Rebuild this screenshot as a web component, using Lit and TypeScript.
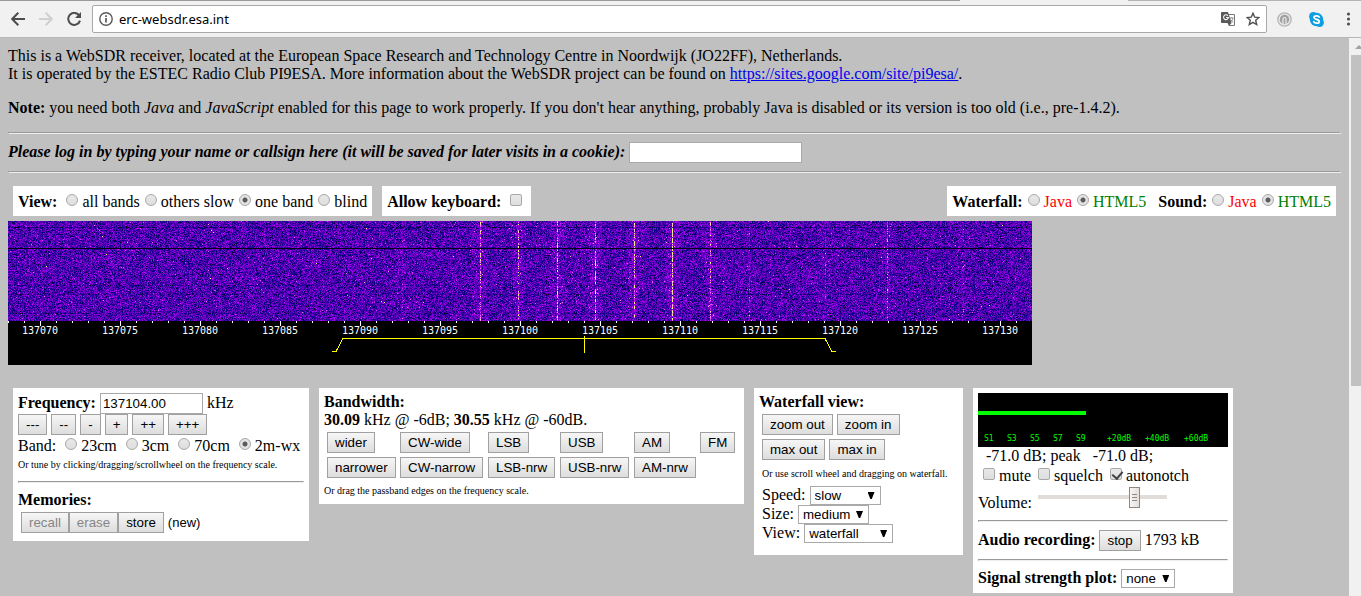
import { LitElement, html, svg, css } from "lit";
import { customElement, property, query } from "lit/decorators.js";

const controls = css`
  * {
    box-sizing: border-box;
  }
  button,
  input,
  select {
    font-family: "Liberation Sans", Arial, sans-serif;
    color: #000;
    margin: 0;
  }
  button {
    height: 21px;
    padding: 0 7px;
    border: 1px solid #a0a0a0;
    border-radius: 0;
    background: linear-gradient(#f6f6f6, #dddddd);
    white-space: nowrap;
  }
  button:disabled {
    color: #858585;
  }
  .text {
    height: 21px;
    padding: 1px 2px;
    border: 1px solid #a9a9a9;
    background: #fff;
  }
  .radio,
  .check {
    appearance: none;
    width: 12px;
    height: 12px;
    margin: 0 4px 0 5px;
    border: 1px solid #a8a8a8;
    background: linear-gradient(#e8e8e8, #dedede);
    vertical-align: 1px;
  }
  .radio {
    border-radius: 50%;
  }
  .radio:checked {
    background: radial-gradient(circle, #5c5c5c 2px, #e4e4e4 3px);
  }
  .check {
    border-radius: 2px;
    position: relative;
  }
  .check:checked::after {
    content: "";
    position: absolute;
    left: 3px;
    top: 0;
    width: 5px;
    height: 8px;
    border: solid #404040;
    border-width: 0 2px 2px 0;
    transform: rotate(40deg);
  }
  hr {
    margin: 8px 0;
    border: 1px solid;
    border-color: #9a9a9a #eee #eee #9a9a9a;
  }
  .line {
    line-height: 18px;
    white-space: nowrap;
  }
  .choices {
    padding-top: 2px;
  }
`;

@customElement("browser-bar")
class BrowserBar extends LitElement {
  static styles = css`
    :host {
      display: block;
    }
    .tabs {
      display: flex;
      height: 1px;
      background: #999;
    }
    .before {
      flex: 960;
    }
    .active {
      flex: 168;
      background: #f2f2f2;
    }
    .after {
      flex: 233;
      background: #b5b5b5;
    }
    .bar {
      display: flex;
      align-items: center;
      height: 36px;
      padding-left: 11px;
      gap: 14px;
      background: #f1f1f1;
    }
    .edge {
      height: 1px;
      background: #b6b6b6;
    }
    svg {
      display: block;
      flex: none;
    }
    .icon {
      padding: 0;
      border: 0;
      background: none;
      flex: none;
    }
    .address {
      display: flex;
      flex: 1;
      align-items: center;
      gap: 6px;
      height: 28px;
      box-sizing: border-box;
      margin-left: -4px;
      padding: 0 6px;
      background: #fff;
      border: 1px solid #a9a9a9;
      border-radius: 2px;
    }
    .url {
      flex: 1;
      min-width: 0;
      padding: 0;
      border: 0;
      font: 13px "Noto Sans", "Open Sans", sans-serif;
      color: #000;
    }
    .tools {
      display: flex;
      align-items: center;
      gap: 17px;
      margin-left: -4px;
      padding-right: 5px;
    }
    .extras {
      display: flex;
      gap: 11px;
    }
  `;

  render() {
    return html`
      <div class="tabs"><i class="before"></i><i class="active"></i><i class="after"></i></div>
      <div class="bar">
        <button class="icon" aria-label="Back">
          <svg width="14" height="14" viewBox="0 0 14 14" fill="none" stroke="#4d4d4d" stroke-width="2">
            <path d="M14 7H1.5M7.3 0.8 1.2 7l6.1 6.2" />
          </svg>
        </button>
        <button class="icon" aria-label="Forward">
          <svg width="14" height="14" viewBox="0 0 14 14" fill="none" stroke="#d0d0d0" stroke-width="2">
            <path d="M0 7h12.5M6.7 0.8 12.8 7l-6.1 6.2" />
          </svg>
        </button>
        <button class="icon" aria-label="Reload">
          <svg width="15" height="14" viewBox="0 0 15 14">
            <path d="M12.3 3.6A6 6 0 1 0 13 8.6" fill="none" stroke="#4d4d4d" stroke-width="2" />
            <path d="M14 0v6H8z" fill="#4d4d4d" />
          </svg>
        </button>
        <div class="address">
          <svg width="14" height="14" viewBox="0 0 14 14">
            <circle cx="7" cy="7" r="6.2" fill="none" stroke="#5a5a5a" stroke-width="1.4" />
            <path d="M7 6v4.5M7 3.3v1.6" stroke="#5a5a5a" stroke-width="1.7" />
          </svg>
          <input class="url" aria-label="Address" value="erc-websdr.esa.int" />
          <div class="extras">
            <svg width="14" height="14" viewBox="0 0 14 14">
              <path d="M5 2.5h8.5v11H8" fill="#fff" stroke="#777" />
              <path d="M0.8 0H7l3.6 11H0.8a.8.8 0 0 1-.8-.8V.8A.8.8 0 0 1 .8 0z" fill="#5a5a5a" />
              <path d="M6.9 3.7a2.4 2.4 0 1 0 .5 1.8H5.1" fill="none" stroke="#fff" stroke-width="1.1" />
              <path d="M8.8 6h3.8M10.7 5v1M12 6c-.4 2-1.3 3.3-2.6 4.3M9.7 7.5c.5 1.3 1.4 2.2 2.6 2.9" fill="none" stroke="#888" stroke-width=".9" />
              <path d="M6.5 11h4l-2.5 3z" fill="#5a5a5a" />
            </svg>
            <svg width="14" height="14" viewBox="0 0 14 14" fill="none" stroke="#505050" stroke-width="1.4">
              <path d="M7 1.2l1.7 3.9 4.3.4-3.3 2.8 1 4.2L7 10.3l-3.7 2.2 1-4.2L1 5.5l4.3-.4z" />
            </svg>
          </div>
        </div>
        <div class="tools">
          <svg width="15" height="15" viewBox="0 0 15 15">
            <circle cx="7.5" cy="7.5" r="6.7" fill="#e8e8e8" stroke="#b5b5b5" stroke-width="1.3" />
            <circle cx="7.5" cy="7.5" r="4.7" fill="#a0a0a0" />
            <path d="M6 12V7a1.5 1.5 0 0 1 3 0v5" fill="none" stroke="#eee" stroke-width="1.2" />
          </svg>
          <svg width="15" height="15" viewBox="0 0 15 15">
            <circle cx="4.4" cy="4.4" r="4.3" fill="#0f9fe0" />
            <circle cx="10.6" cy="10.6" r="4.3" fill="#0f9fe0" />
            <circle cx="7.5" cy="7.5" r="6.7" fill="#0f9fe0" />
            <path d="M10.3 5.1C9.6 3.7 5 3.3 5 5.6c0 2.2 5.3 1.4 5.3 3.9 0 2.3-4.7 2.2-5.6.2" fill="none" stroke="#fff" stroke-width="1.7" stroke-linecap="round" />
          </svg>
          <button class="icon" aria-label="Menu">
            <svg width="15" height="14" viewBox="0 0 15 14" fill="#505050">
              <circle cx="7.5" cy="2" r="1.6" /><circle cx="7.5" cy="7" r="1.6" /><circle cx="7.5" cy="12" r="1.6" />
            </svg>
          </button>
        </div>
      </div>
      <div class="edge"></div>
    `;
  }
}

@customElement("drop-down")
class DropDown extends LitElement {
  @property() label = "";
  @property() value = "";
  @property() size = "";

  static styles = [
    controls,
    css`
      :host {
        display: block;
        line-height: 18px;
        height: 19px;
        white-space: nowrap;
      }
      :host([heading]) label {
        font-weight: bold;
      }
      .box {
        position: relative;
        display: inline-block;
        height: 19px;
      }
      .box::after {
        content: "";
        position: absolute;
        right: 6px;
        top: 6px;
        width: 7px;
        height: 7px;
        background: #000;
        clip-path: polygon(0 0, 100% 0, 60% 100%, 40% 100%);
        pointer-events: none;
      }
      select {
        appearance: none;
        height: 19px;
        padding: 0 4px;
        border: 1px solid #a9a9a9;
        border-radius: 0;
        background: #fff;
      }
      .small {
        width: 54px;
      }
      .medium {
        width: 71px;
      }
      .large {
        width: 89px;
      }
    `,
  ];

  render() {
    return html`<label for="s">${this.label}</label> <span class="box"
        ><select id="s" class=${this.size}><option>${this.value}</option></select></span
      >`;
  }
}

@customElement("water-fall")
class WaterFall extends LitElement {
  @query("canvas") canvas!: HTMLCanvasElement;

  static styles = css`
    :host {
      display: block;
      width: 1024px;
      max-width: 100%;
      overflow: hidden;
      background: #000;
    }
    canvas,
    svg {
      display: block;
    }
    .tick {
      fill: #fff;
    }
    .freq {
      fill: #fff;
      font: 10px "DejaVu Sans Mono", monospace;
      text-anchor: middle;
    }
    .pass {
      fill: none;
      stroke: #ff0;
      shape-rendering: crispEdges;
    }
  `;

  firstUpdated() {
    const width = 1024;
    const height = 100;
    const ctx = this.canvas.getContext("2d")!;
    const image = ctx.createImageData(width, height);
    let seed = 137104;
    const random = () => {
      seed = (Math.imul(seed, 1664525) + 1013904223) >>> 0;
      return seed / 4294967296;
    };
    // Signal level to colour: black, blue, violet, magenta, pink, yellow.
    const stops = [
      [0, 0, 0, 20],
      [0.2, 0, 0, 125],
      [0.42, 76, 0, 175],
      [0.62, 140, 0, 220],
      [0.78, 190, 10, 255],
      [0.9, 255, 140, 240],
      [1, 255, 250, 130],
    ];
    const colour = (v: number) => {
      let i = 1;
      while (i < stops.length - 1 && v > stops[i][0]) i++;
      const [a, b] = [stops[i - 1], stops[i]];
      const t = Math.min(1, Math.max(0, (v - a[0]) / (b[0] - a[0])));
      return [1, 2, 3].map((k) => a[k] + (b[k] - a[k]) * t);
    };
    // Column and strength of each carrier.
    const carriers: [number, number][] = [
      [394, 0.14], [472, 0.38], [510, 0.42], [549, 0.44], [587, 0.42],
      [626, 0.43], [664, 0.54], [702, 0.34], [741, 0.14], [817, 0.16], [879, 0.28], [955, 0.1],
    ];
    const column = new Array(width).fill(0);
    const halo = new Array(width).fill(0);
    for (const [x, level] of carriers) {
      column[x] = level;
      for (let d = -9; d <= 9; d++) halo[x + d] = level * 0.22 * (1 - Math.abs(d) / 10);
    }
    const rows: Record<number, number> = { 6: -0.15, 27: -1, 64: -0.08, 73: -0.08, 92: -0.08 };
    for (let y = 0; y < height; y++) {
      for (let x = 0; x < width; x++) {
        const noise = (random() + random() + random()) / 3;
        let v = 0.42 + (noise - 0.5) * 0.95 + halo[x] + (rows[y] ?? 0);
        if (column[x] && random() < 0.85) v += column[x] * 0.9;
        if (random() < 0.0015) v += 0.35;
        const p = (y * width + x) * 4;
        const [r, g, b] = colour(v);
        image.data[p] = r;
        image.data[p + 1] = g;
        image.data[p + 2] = b;
        image.data[p + 3] = 255;
      }
    }
    ctx.putImageData(image, 0, 0);
  }

  render() {
    const ticks = Array.from({ length: 64 }, (_, i) => i * 16);
    const labels = Array.from({ length: 13 }, (_, i) => ({ x: 32 + i * 80, text: 137070 + i * 5 }));
    return html`
      <canvas width="1024" height="100"></canvas>
      <svg width="1024" height="44" viewBox="0 0 1024 44">
        ${ticks.map((x) => svg`<rect class="tick" x=${x} y="0" width="1" height="2"></rect>`)}
        ${labels.map(
          (l) => svg`<rect class="tick" x=${l.x} y="0" width="1" height="5"></rect>
            <text class="freq" x=${l.x} y="13">${l.text}</text>`
        )}
        <path class="pass" d="M324 30.5h4L335 17.5H817L824 30.5h4M576.5 15v17" />
      </svg>
    `;
  }
}

@customElement("signal-meter")
class SignalMeter extends LitElement {
  static styles = css`
    :host {
      display: block;
      background: #000;
    }
    svg {
      display: block;
    }
    text {
      fill: #0f0;
      font: 8px "DejaVu Sans Mono", monospace;
    }
  `;

  render() {
    const marks: [number, string][] = [
      [6, "S1"], [29, "S3"], [52, "S5"], [75, "S7"], [98, "S9"],
      [129, "+20dB"], [167, "+40dB"], [206, "+60dB"],
    ];
    return html`<svg width="250" height="54" viewBox="0 0 250 54">
      <rect x="0" y="18" width="108" height="4" fill="#0f0" />
      ${marks.map(([x, t]) => svg`<text x=${x} y="48">${t}</text>`)}
    </svg>`;
  }
}

@customElement("app-root")
class AppRoot extends LitElement {
  static styles = [
    controls,
    css`
      :host {
        display: flex;
        flex-direction: column;
        height: 100vh;
        overflow: hidden;
        background: #c0c0c0;
        color: #000;
        font: 16px "Liberation Serif", "Times New Roman", serif;
        line-height: 18px;
      }
      .window {
        display: flex;
        flex: 1;
        min-height: 0;
      }
      .page {
        flex: 1;
        min-width: 0;
        padding: 9px 8px 8px;
        overflow: hidden;
      }
      .scroll {
        flex: none;
        width: 12px;
        padding: 7px 0 0 2px;
        background: #f1f1f1;
        overflow: hidden;
      }
      .up {
        width: 8px;
        height: 4px;
        margin-left: 4px;
        background: #a3a3a3;
        clip-path: polygon(50% 0, 100% 100%, 0 100%);
      }
      .thumb {
        height: 60%;
        margin-top: 6px;
        background: #c1c1c1;
      }
      p {
        margin: 0 0 16px;
      }
      .requirements {
        margin-bottom: 15px;
      }
      a {
        color: #00e;
      }
      .login {
        height: 21px;
        font-weight: bold;
        font-style: italic;
      }
      .name {
        width: 173px;
      }
      .options {
        display: flex;
        gap: 10px;
        padding: 5px;
      }
      .panel {
        padding: 5px;
        background: #fff;
      }
      .option {
        padding-top: 7px;
      }
      .push {
        margin-left: auto;
      }
      .next {
        margin-left: 12px;
      }
      .java {
        color: #f00;
      }
      .html5 {
        color: #008000;
      }
      .panels {
        display: flex;
        align-items: flex-start;
        gap: 10px;
        padding: 23px 5px 0;
      }
      .tuning {
        flex: 0 0 296px;
      }
      .bandwidth {
        flex: 0 0 425px;
      }
      .view {
        flex: 0 0 209px;
        padding-bottom: 9px;
      }
      .audio {
        flex: 0 0 260px;
      }
      .note {
        font-size: 10px;
        line-height: 18px;
        padding-top: 1px;
        margin-bottom: -1px;
        white-space: nowrap;
      }
      .steps {
        display: flex;
        gap: 4px;
      }
      .frequency {
        width: 103px;
      }
      .field {
        height: 21px;
      }
      .bands {
        display: flex;
        gap: 4px;
      }
      .memories {
        display: flex;
        align-items: center;
        padding: 3px;
        font: 13px "Liberation Sans", Arial, sans-serif;
      }
      .slot {
        margin-left: 4px;
      }
      .modes {
        display: grid;
        grid-template: auto auto / 69px 84px 68px 70px 62px auto;
        grid-auto-flow: column;
        justify-content: start;
        justify-items: start;
        gap: 4px;
        padding: 3px;
      }
      .stack {
        display: grid;
        gap: 4px;
        padding: 3px;
      }
      .checks {
        display: flex;
        gap: 2px;
      }
      .level {
        padding-left: 8px;
      }
      .volume {
        display: flex;
        gap: 6px;
        padding: 2px 0 0;
        height: 27px;
      }
      .volume label {
        padding-top: 7px;
      }
      .slider {
        appearance: none;
        width: 129px;
        height: 21px;
        background: linear-gradient(#e2dcd8, #e2dcd8) 0 8px / 100% 4px no-repeat;
      }
      .slider::-webkit-slider-thumb {
        appearance: none;
        width: 11px;
        height: 21px;
        border: 1px solid #8f8782;
        background:
          repeating-linear-gradient(#8f8782 0 1px, transparent 1px 3px) center / 5px 7px no-repeat,
          linear-gradient(90deg, #f8f6f4, #e4dfdb);
      }
    `,
  ];

  private radio(group: string, id: string, text: string, checked = false, tone = "") {
    return html`<label class=${tone}><input class="radio" type="radio" name=${group} value=${id} ?checked=${checked} />${text}</label>`;
  }

  private check(text: string, checked = false) {
    return html`<label><input class="check" type="checkbox" ?checked=${checked} />${text}</label>`;
  }

  render() {
    return html`
      <browser-bar></browser-bar>
      <div class="window">
        <main class="page">
          <p>
            This is a WebSDR receiver, located at the European Space Research and Technology Centre in Noordwijk (JO22FF), Netherlands.<br />
            It is operated by the ESTEC Radio Club PI9ESA. More information about the WebSDR project can be found on
            <a href="https://sites.google.com/site/pi9esa/">https://sites.google.com/site/pi9esa/</a>.
          </p>
          <p class="requirements">
            <b>Note:</b> you need both <i>Java</i> and <i>JavaScript</i> enabled for this page to work properly. If you don't
            hear anything, probably Java is disabled or its version is too old (i.e., pre-1.4.2).
          </p>
          <hr />
          <div class="line login">
            <label for="name">Please log in by typing your name or callsign here (it will be saved for later visits in a cookie):</label>
            <input id="name" class="text name" type="text" />
          </div>
          <hr />
          <div class="options">
            <div class="panel line option">
              <b>View:</b>
              ${this.radio("view", "all", "all bands")}${this.radio("view", "slow", "others slow")}${this.radio("view", "one", "one band", true)}${this.radio("view", "blind", "blind")}
            </div>
            <div class="panel line option">
              <label><b>Allow keyboard:</b> <input class="check" type="checkbox" /></label>
            </div>
            <div class="panel line option push">
              <b>Waterfall:</b>${this.radio("waterfall", "java", "Java", false, "java")}${this.radio("waterfall", "html5", "HTML5", true, "html5")}<b class="next">Sound:</b>${this.radio("sound", "java", "Java", false, "java")}${this.radio("sound", "html5", "HTML5", true, "html5")}
            </div>
          </div>
          <water-fall></water-fall>
          <div class="panels">
            <section class="panel tuning">
              <div class="line field">
                <label for="freq"><b>Frequency:</b></label>
                <input id="freq" class="text frequency" type="text" value="137104.00" /> kHz
              </div>
              <div class="steps">
                ${["---", "--", "-", "+", "++", "+++"].map((s) => html`<button>${s}</button>`)}
              </div>
              <div class="line choices bands">
                <span>Band:</span>
                <span>${this.radio("band", "23", "23cm")}</span><span>${this.radio("band", "3", "3cm")}</span><span>${this.radio("band", "70", "70cm")}</span><span>${this.radio("band", "2", "2m-wx", true)}</span>
              </div>
              <div class="note">Or tune by clicking/dragging/scrollwheel on the frequency scale.</div>
              <hr />
              <b>Memories:</b>
              <div class="memories">
                <button disabled>recall</button><button disabled>erase</button><button>store</button>
                <span class="slot">(new)</span>
              </div>
            </section>
            <section class="panel bandwidth">
              <b>Bandwidth:</b>
              <div class="line"><b>30.09</b> kHz @ -6dB; <b>30.55</b> kHz @ -60dB.</div>
              <div class="modes">
                ${["wider", "narrower", "CW-wide", "CW-narrow", "LSB", "LSB-nrw", "USB", "USB-nrw", "AM", "AM-nrw", "FM"].map(
                  (m) => html`<button>${m}</button>`
                )}
              </div>
              <div class="note">Or drag the passband edges on the frequency scale.</div>
            </section>
            <section class="panel view">
              <b>Waterfall view:</b>
              <div class="stack">
                <div class="steps"><button>zoom out</button><button>zoom in</button></div>
                <div class="steps"><button>max out</button><button>max in</button></div>
                <div class="note">Or use scroll wheel and dragging on waterfall.</div>
                <div>
                  <drop-down label="Speed:" value="slow" size="medium"></drop-down>
                  <drop-down label="Size:" value="medium" size="medium"></drop-down>
                  <drop-down label="View:" value="waterfall" size="large"></drop-down>
                </div>
              </div>
            </section>
            <section class="panel audio">
              <signal-meter></signal-meter>
              <div class="line level">-71.0 dB; peak &nbsp; -71.0 dB;</div>
              <div class="line choices checks">${this.check("mute")}${this.check("squelch")}${this.check("autonotch", true)}</div>
              <div class="volume">
                <label for="volume">Volume:</label>
                <input id="volume" class="slider" type="range" min="0" max="100" value="77" />
              </div>
              <hr />
              <div class="line field"><b>Audio recording:</b> <button>stop</button> 1793 kB</div>
              <hr />
              <drop-down heading label="Signal strength plot:" value="none" size="small"></drop-down>
            </section>
          </div>
        </main>
        <div class="scroll" aria-hidden="true">
          <div class="up"></div>
          <div class="thumb"></div>
        </div>
      </div>
    `;
  }
}
